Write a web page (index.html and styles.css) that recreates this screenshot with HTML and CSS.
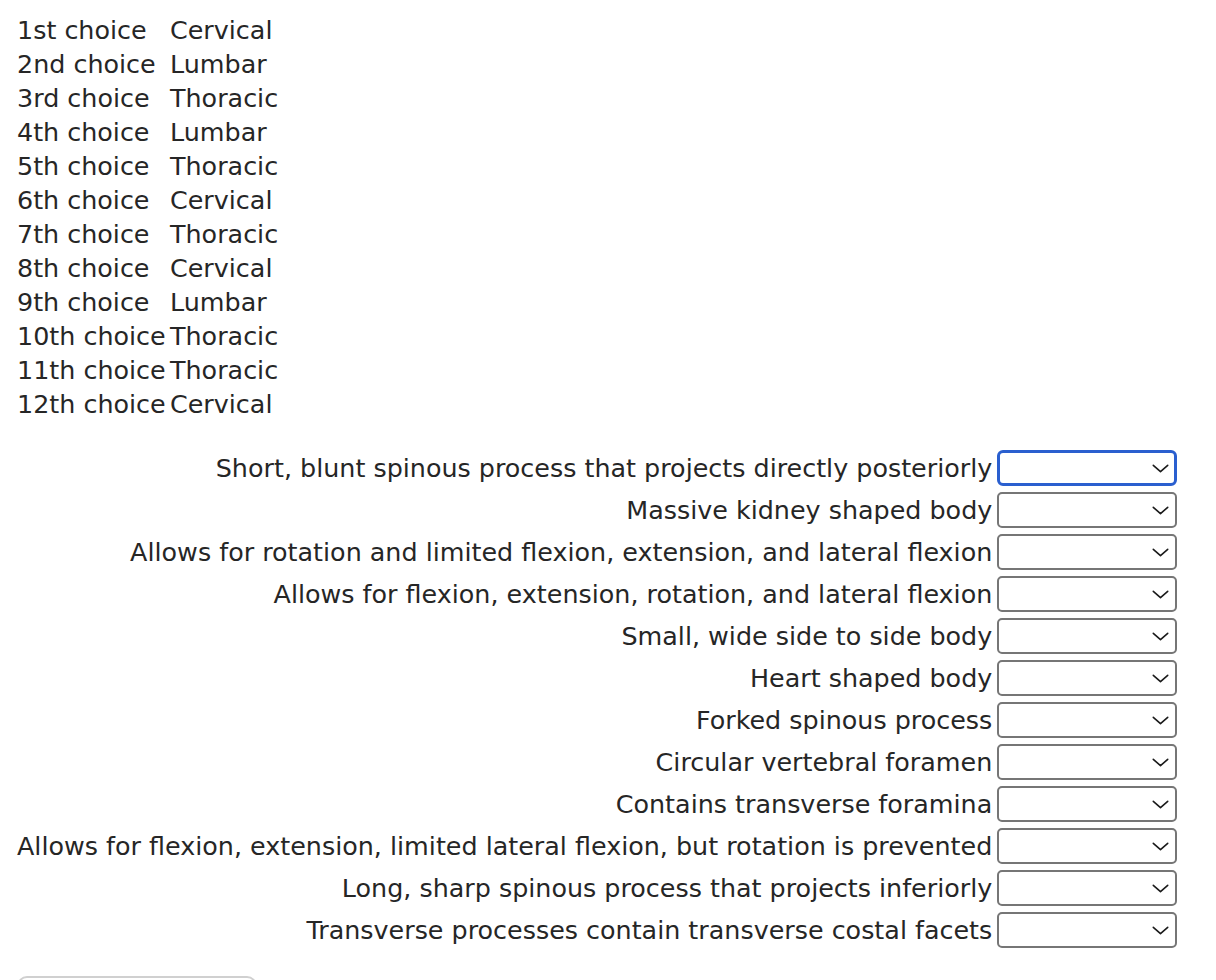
FILE: index.html
```html
<!DOCTYPE html>
<html lang="en">
<head>
<meta charset="utf-8">
<title>Vertebrae matching</title>
<link rel="stylesheet" href="styles.css">
</head>
<body>
<div class="page">
  <table class="choices">
    <tr><td class="ord">1st choice</td><td>Cervical</td></tr>
    <tr><td class="ord">2nd choice</td><td>Lumbar</td></tr>
    <tr><td class="ord">3rd choice</td><td>Thoracic</td></tr>
    <tr><td class="ord">4th choice</td><td>Lumbar</td></tr>
    <tr><td class="ord">5th choice</td><td>Thoracic</td></tr>
    <tr><td class="ord">6th choice</td><td>Cervical</td></tr>
    <tr><td class="ord">7th choice</td><td>Thoracic</td></tr>
    <tr><td class="ord">8th choice</td><td>Cervical</td></tr>
    <tr><td class="ord">9th choice</td><td>Lumbar</td></tr>
    <tr><td class="ord">10th choice</td><td>Thoracic</td></tr>
    <tr><td class="ord">11th choice</td><td>Thoracic</td></tr>
    <tr><td class="ord">12th choice</td><td>Cervical</td></tr>
  </table>

  <table class="match">
    <tr><td class="q">Short, blunt spinous process that projects directly posteriorly</td><td class="a"><span class="sel"><select class="box focused"><option></option><option>Cervical</option><option>Thoracic</option><option>Lumbar</option></select><svg class="chev" viewBox="0 0 18 10"><path d="M1 1.5 L9 8.5 L17 1.5"/></svg></span></td></tr>
    <tr><td class="q">Massive kidney shaped body</td><td class="a"><span class="sel"><select class="box"><option></option><option>Cervical</option><option>Thoracic</option><option>Lumbar</option></select><svg class="chev" viewBox="0 0 18 10"><path d="M1 1.5 L9 8.5 L17 1.5"/></svg></span></td></tr>
    <tr><td class="q">Allows for rotation and limited flexion, extension, and lateral flexion</td><td class="a"><span class="sel"><select class="box"><option></option><option>Cervical</option><option>Thoracic</option><option>Lumbar</option></select><svg class="chev" viewBox="0 0 18 10"><path d="M1 1.5 L9 8.5 L17 1.5"/></svg></span></td></tr>
    <tr><td class="q">Allows for flexion, extension, rotation, and lateral flexion</td><td class="a"><span class="sel"><select class="box"><option></option><option>Cervical</option><option>Thoracic</option><option>Lumbar</option></select><svg class="chev" viewBox="0 0 18 10"><path d="M1 1.5 L9 8.5 L17 1.5"/></svg></span></td></tr>
    <tr><td class="q">Small, wide side to side body</td><td class="a"><span class="sel"><select class="box"><option></option><option>Cervical</option><option>Thoracic</option><option>Lumbar</option></select><svg class="chev" viewBox="0 0 18 10"><path d="M1 1.5 L9 8.5 L17 1.5"/></svg></span></td></tr>
    <tr><td class="q">Heart shaped body</td><td class="a"><span class="sel"><select class="box"><option></option><option>Cervical</option><option>Thoracic</option><option>Lumbar</option></select><svg class="chev" viewBox="0 0 18 10"><path d="M1 1.5 L9 8.5 L17 1.5"/></svg></span></td></tr>
    <tr><td class="q">Forked spinous process</td><td class="a"><span class="sel"><select class="box"><option></option><option>Cervical</option><option>Thoracic</option><option>Lumbar</option></select><svg class="chev" viewBox="0 0 18 10"><path d="M1 1.5 L9 8.5 L17 1.5"/></svg></span></td></tr>
    <tr><td class="q">Circular vertebral foramen</td><td class="a"><span class="sel"><select class="box"><option></option><option>Cervical</option><option>Thoracic</option><option>Lumbar</option></select><svg class="chev" viewBox="0 0 18 10"><path d="M1 1.5 L9 8.5 L17 1.5"/></svg></span></td></tr>
    <tr><td class="q">Contains transverse foramina</td><td class="a"><span class="sel"><select class="box"><option></option><option>Cervical</option><option>Thoracic</option><option>Lumbar</option></select><svg class="chev" viewBox="0 0 18 10"><path d="M1 1.5 L9 8.5 L17 1.5"/></svg></span></td></tr>
    <tr><td class="q">Allows for flexion, extension, limited lateral flexion, but rotation is prevented</td><td class="a"><span class="sel"><select class="box"><option></option><option>Cervical</option><option>Thoracic</option><option>Lumbar</option></select><svg class="chev" viewBox="0 0 18 10"><path d="M1 1.5 L9 8.5 L17 1.5"/></svg></span></td></tr>
    <tr><td class="q">Long, sharp spinous process that projects inferiorly</td><td class="a"><span class="sel"><select class="box"><option></option><option>Cervical</option><option>Thoracic</option><option>Lumbar</option></select><svg class="chev" viewBox="0 0 18 10"><path d="M1 1.5 L9 8.5 L17 1.5"/></svg></span></td></tr>
    <tr><td class="q">Transverse processes contain transverse costal facets</td><td class="a"><span class="sel"><select class="box"><option></option><option>Cervical</option><option>Thoracic</option><option>Lumbar</option></select><svg class="chev" viewBox="0 0 18 10"><path d="M1 1.5 L9 8.5 L17 1.5"/></svg></span></td></tr>
  </table>

  <button class="submit" type="button">Check answers</button>
</div>
</body>
</html>
```

FILE: styles.css
```css
html, body {
  margin: 0;
  padding: 0;
  background: #ffffff;
}

body {
  font-family: "DejaVu Sans", Verdana, sans-serif;
  font-size: 25.4px;
  color: #262626;
}

.page {
  padding: 13px 0 0 17px;
}

table {
  border-collapse: collapse;
  border-spacing: 0;
}

td {
  padding: 0;
}

.choices td {
  height: 34px;
  line-height: 34px;
  white-space: nowrap;
}

.choices td.ord {
  width: 151px;
  padding-right: 2px;
}

.match {
  margin-top: 26px;
}

.match td {
  height: 42px;
  white-space: nowrap;
  vertical-align: middle;
}

.match td.q {
  text-align: right;
  padding-right: 5px;
}

.sel {
  position: relative;
  display: inline-block;
  vertical-align: middle;
}

.box {
  -webkit-appearance: none;
  appearance: none;
  display: block;
  width: 180px;
  height: 36px;
  margin: 0;
  padding: 0 10px;
  border: 2px solid #767676;
  border-radius: 5px;
  background: #ffffff;
  font: inherit;
  outline: none;
}

.box.focused {
  border: 3px solid #2a5fcf;
  border-radius: 6px;
}

.chev {
  position: absolute;
  right: 8px;
  top: 14px;
  width: 17px;
  height: 9px;
  pointer-events: none;
}

.chev path {
  fill: none;
  stroke: #1a1a1a;
  stroke-width: 1.8;
  stroke-linecap: round;
  stroke-linejoin: round;
}

.submit {
  display: block;
  margin-top: 25px;
  width: 240px;
  height: 64px;
  padding: 30px 0 0;
  border: 2px solid #d0d0d0;
  border-radius: 10px;
  background: #ffffff;
  font: inherit;
  color: #262626;
}
```
